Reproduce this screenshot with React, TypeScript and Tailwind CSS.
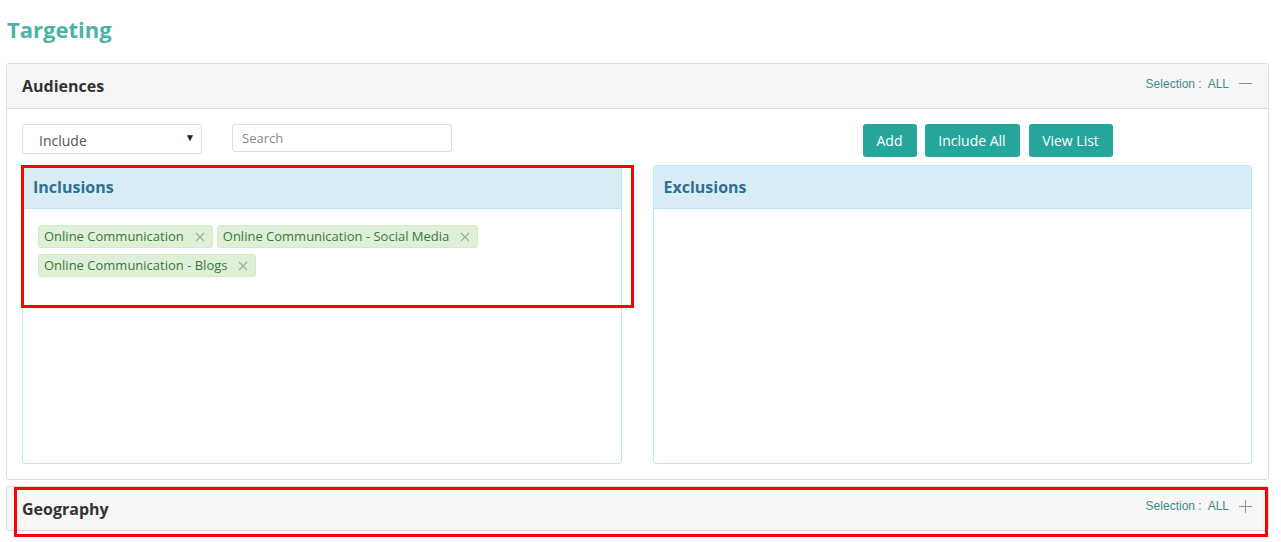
import { ReactNode } from 'react'

const tags = [
  'Online Communication',
  'Online Communication - Social Media',
  'Online Communication - Blogs'
]

function Selection({ icon }: { icon: 'minus' | 'plus' }) {
  return (
    <div className="-mt-[5px] flex items-center gap-[10px] text-[12px] text-[#3b8b86]" style={{ fontFamily: '"Liberation Sans", Arial, sans-serif' }}>
      <span>
        Selection :&nbsp; ALL
      </span>
      <svg width="13" height="13" viewBox="0 0 13 13" className="text-[#9b8c84]">
        <line x1="0" y1="6.5" x2="13" y2="6.5" stroke="currentColor" strokeWidth="1" />
        {icon === 'plus' && <line x1="6.5" y1="0" x2="6.5" y2="13" stroke="currentColor" strokeWidth="1" />}
      </svg>
    </div>
  )
}

function InfoPanel({ title, children }: { title: string; children?: ReactNode }) {
  return (
    <div className="h-[299px] rounded-[3px] border border-[#bce8f1] bg-white">
      <div className="flex h-[43px] items-center border-b border-[#bce8f1] bg-[#d9edf7] px-[10px]">
        <h3 className="text-[16px] font-bold text-[#31708f]">{title}</h3>
      </div>
      {children}
    </div>
  )
}

function Tag({ label }: { label: string }) {
  return (
    <span className="flex h-[23px] items-center gap-[11px] rounded-[3px] border border-[#d6e9c6] bg-[#dff0d8] pl-[5px] pr-[7px] text-[13px] text-[#3c763d]">
      {label}
      <svg width="10" height="10" viewBox="0 0 10 10" className="text-[#a3a9a0]">
        <path d="M1 1L9 9M9 1L1 9" stroke="currentColor" strokeWidth="1.1" />
      </svg>
    </span>
  )
}

export default function App() {
  return (
    <div className="relative min-h-[542px] bg-white px-[6px] pr-[12px]" style={{ fontFamily: '"Open Sans", "Noto Sans", sans-serif' }}>
      <h1 className="pl-[1px] pt-[14px] text-[22px] font-bold leading-[30px] text-[#4db3a2]">Targeting</h1>

      {/* Audiences */}
      <div className="mt-[19px] rounded-[3px] border border-[#dddddd]">
        <div className="flex h-[45px] items-center justify-between border-b border-[#dddddd] bg-[#f7f7f7] pl-[15px] pr-[16px]">
          <h2 className="text-[16px] font-bold text-[#333333]">Audiences</h2>
          <Selection icon="minus" />
        </div>

        <div className="px-[15px] pb-[15px] pr-[16px] pt-[15px]">
          <div className="mb-[7px] grid h-[34px] grid-cols-2 gap-[31px]">
            <div className="flex items-start gap-[30px]">
              <div className="relative flex h-[30px] w-[180px] items-center rounded-[3px] border border-[#dddddd] pl-[16px] text-[14px] text-[#555555]">
                <span className="pt-[3px]">Include</span>
                <span className="absolute right-[6px] top-[5px] text-[10px] text-[#222222]">▼</span>
              </div>
              <input
                placeholder="Search"
                className="h-[28px] w-[220px] rounded-[3px] border border-[#dddddd] px-[9px] text-[13px] text-[#555555] outline-none placeholder:text-[#888888]"
              />
            </div>
            <div className="flex items-start gap-[8px] pl-[210px]">
              <button className="h-[33px] w-[54px] rounded-[3px] bg-[#26a69a] text-[14px] text-white">Add</button>
              <button className="h-[33px] w-[95px] rounded-[3px] bg-[#26a69a] text-[14px] text-white">Include All</button>
              <button className="ml-[1px] h-[33px] w-[84px] rounded-[3px] bg-[#26a69a] text-[14px] text-white">View List</button>
            </div>
          </div>

          <div className="grid grid-cols-2 gap-[31px]">
            <InfoPanel title="Inclusions">
              <div className="flex flex-wrap gap-x-[4px] gap-y-[6px] pl-[15px] pr-[15px] pt-[16px]">
                {tags.map(t => (
                  <Tag key={t} label={t} />
                ))}
              </div>
            </InfoPanel>
            <InfoPanel title="Exclusions" />
          </div>
        </div>
      </div>

      {/* Geography */}
      <div className="mt-[6px] flex h-[45px] items-center justify-between rounded-[3px] border border-[#dddddd] bg-[#f7f7f7] pl-[15px] pr-[16px]">
        <h2 className="text-[16px] font-bold text-[#333333]">Geography</h2>
        <Selection icon="plus" />
      </div>

      {/* annotation boxes */}
      <div className="pointer-events-none absolute left-[21px] top-[165px] h-[143px] w-[613px] border-[3px] border-[#ff0000]" />
      <div className="pointer-events-none absolute left-[14px] top-[487px] h-[50px] w-[1254px] border-[3px] border-[#ff0000]" />
    </div>
  )
}
